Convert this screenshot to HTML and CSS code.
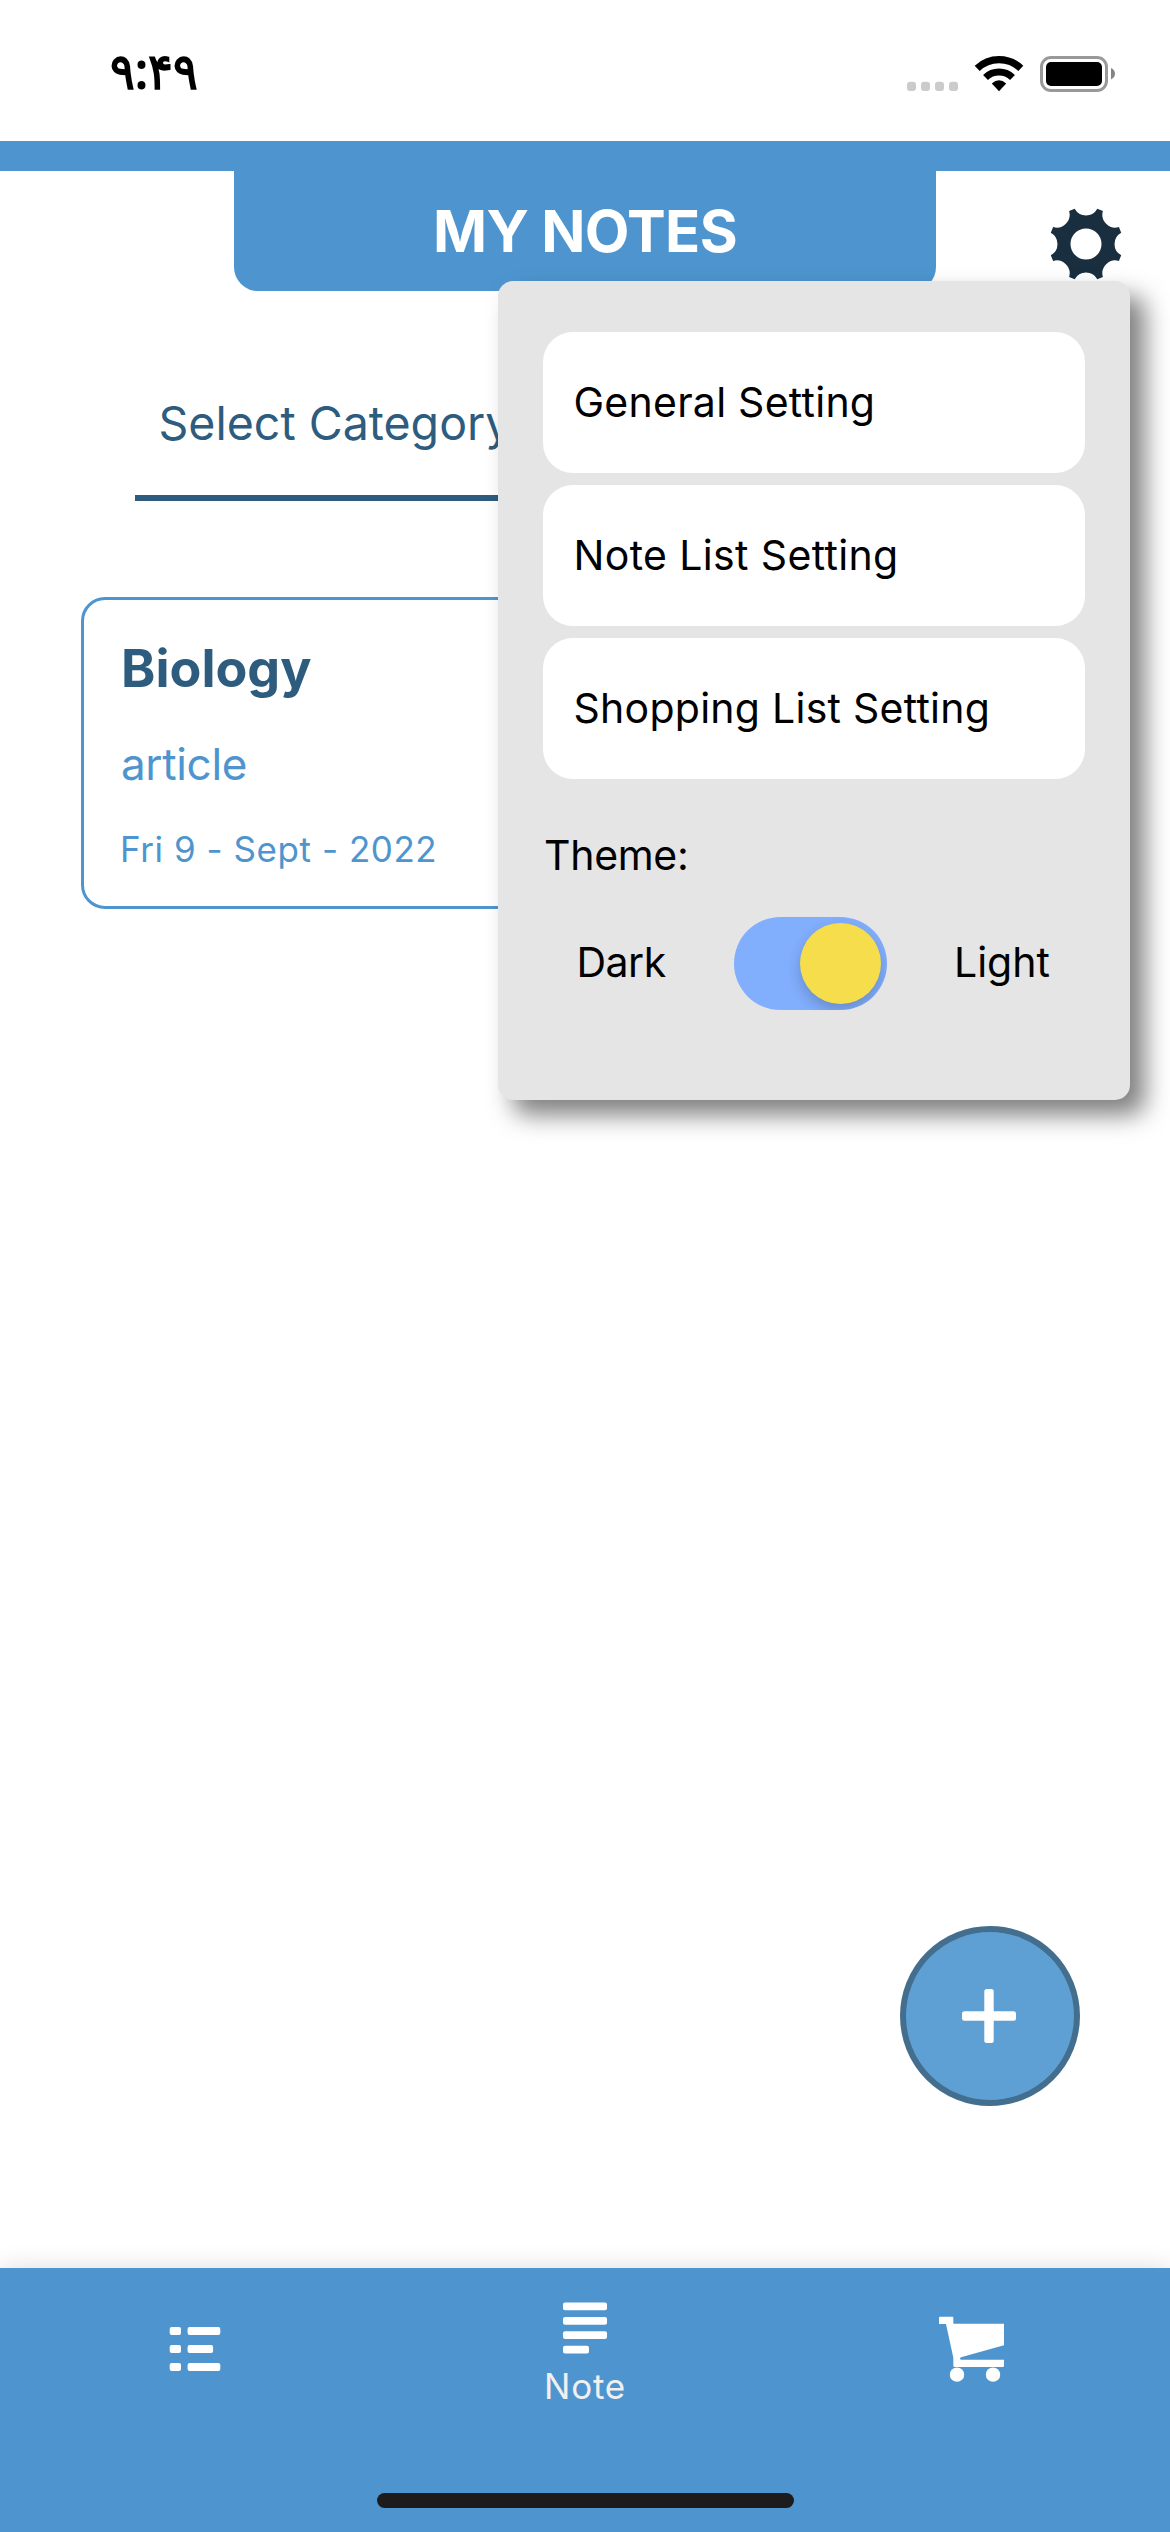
FILE: index.html
```
<!DOCTYPE html>
<html lang="en">
<head>
  <meta charset="utf-8">
  <title>My Notes</title>
  <link rel="stylesheet" href="styles.css">
</head>
<body>
  <div class="status-bar">
    <span class="clock">۹:۴۹</span>
    <svg class="status-icons" width="210" height="38" viewBox="906 55 210 38" aria-hidden="true">
      <g fill="#cbcbcb">
        <rect x="907" y="81.7" width="9" height="9.3" rx="3"/>
        <rect x="921" y="81.7" width="9" height="9.3" rx="3"/>
        <rect x="935" y="81.7" width="9" height="9.3" rx="3"/>
        <rect x="949" y="81.7" width="9" height="9.3" rx="3"/>
      </g>
      <path d="M999 91.2 L991.8 83.6 Q999 76.8 1006.2 83.6 Z"/>
      <path d="M985.5 77.5 A19.5 19.5 0 0 1 1012.5 77.5" fill="none" stroke="#000" stroke-width="7"/>
      <path d="M977.2 68.3 A31.5 31.5 0 0 1 1020.8 68.3" fill="none" stroke="#000" stroke-width="7.2"/>
      <rect x="1041.5" y="57.5" width="65" height="33" rx="9.5" fill="none" stroke="#999" stroke-width="3"/>
      <rect x="1046" y="62" width="56" height="24" rx="5"/>
      <path d="M1111 68 Q1115 70 1115 73.8 Q1115 77.5 1111 79.5 Z" fill="#848484"/>
    </svg>
  </div>

  <header class="header">
    <h1 class="header-title">MY NOTES</h1>
    <svg class="gear" width="76" height="76" viewBox="-38 -38 76 76" role="img" aria-label="Settings">
      <path fill="#192e3f" fill-rule="evenodd" d="M-11.3 -35.2 A12.9 12.9 0 0 0 11.3 -35.2 L16.9 -32.9 A12.9 12.9 0 0 0 32.9 -16.9 L35.2 -11.3 A12.9 12.9 0 0 0 35.2 11.3 L32.9 16.9 A12.9 12.9 0 0 0 16.9 32.9 L11.3 35.2 A12.9 12.9 0 0 0 -11.3 35.2 L-16.9 32.9 A12.9 12.9 0 0 0 -32.9 16.9 L-35.2 11.3 A12.9 12.9 0 0 0 -35.2 -11.3 L-32.9 -16.9 A12.9 12.9 0 0 0 -16.9 -32.9 Z M15.5 0 A15.5 15.5 0 1 0 -15.5 0 A15.5 15.5 0 1 0 15.5 0 Z"/>
    </svg>
  </header>

  <main class="content">
    <div class="category">Select Category</div>
    <article class="note">
      <h2 class="note-title">Biology</h2>
      <p class="note-text">article</p>
      <p class="note-date">Fri 9 - Sept - 2022</p>
    </article>
  </main>

  <nav class="tabs">
    <a class="tab">
      <svg width="52" height="46" viewBox="169 2326 52 46" fill="#fff" aria-label="List">
        <rect x="169.7" y="2327" width="11.3" height="8" rx="2"/><rect x="187.6" y="2327" width="32.7" height="8" rx="2"/>
        <rect x="169.7" y="2345" width="11.3" height="8" rx="2"/><rect x="187.6" y="2345" width="25.5" height="8" rx="2"/>
        <rect x="169.7" y="2363" width="11.3" height="8" rx="2"/><rect x="187.6" y="2363" width="32.7" height="8" rx="2"/>
      </svg>
    </a>
    <a class="tab tab-active">
      <svg width="46" height="54" viewBox="562 2301 46 54" fill="#fff" aria-hidden="true">
        <rect x="563" y="2302.5" width="44" height="7.7" rx="2"/>
        <rect x="563" y="2317" width="44" height="7.7" rx="2"/>
        <rect x="563" y="2331.3" width="44" height="7.7" rx="2"/>
        <rect x="563" y="2345.8" width="26" height="7.7" rx="2"/>
      </svg>
      <span class="tab-label">Note</span>
    </a>
    <a class="tab tab-cart">
      <svg width="66" height="67" viewBox="117 197 198 201" fill="#fff" aria-label="Shopping">
        <path d="M120 199 H157 Q160 199 160 202 V220 H312 V285 L183 321 Q180 323 180 325 Q180 328 185 328 H312 V347 Q312 350 308 350 H164 Q160 350 160 346 V322 L138 221 H117 V202 Q117 199 120 199 Z"/>
        <circle cx="171" cy="373" r="21.5"/><circle cx="279" cy="373" r="21.5"/>
      </svg>
    </a>
    <div class="home-indicator"></div>
  </nav>

  <button class="fab" aria-label="Add note">
    <svg width="54" height="54" viewBox="0 0 54 54" fill="#fff"><rect x="0" y="22.3" width="54" height="9.4" rx="2.5"/><rect x="22.3" y="0" width="9.4" height="54" rx="2.5"/></svg>
  </button>

  <section class="menu">
    <div class="menu-list">
      <div class="menu-item">General Setting</div>
      <div class="menu-item menu-item-notes">Note List Setting</div>
      <div class="menu-item">Shopping List Setting</div>
    </div>
    <div class="theme-label">Theme:</div>
    <div class="theme-row">
      <span class="theme-dark">Dark</span>
      <span class="toggle"><span class="knob"></span></span>
      <span class="theme-light">Light</span>
    </div>
  </section>
</body>
</html>
```
FILE: styles.css
```
* {
  box-sizing: border-box;
  margin: 0;
  padding: 0;
}

body {
  position: relative;
  display: flex;
  flex-direction: column;
  width: 1170px;
  height: 2532px;
  overflow: hidden;
  background: #fff;
  color: #000;
  font-family: Inter, "Liberation Sans", sans-serif;
}

svg {
  display: block;
}

.status-bar {
  display: flex;
  justify-content: space-between;
  align-items: flex-start;
  height: 141px;
  padding: 0 54px 0 110px;
}

.clock {
  padding-top: 36px;
  font: 700 50px/68px "Noto Sans";
  transform: scaleX(0.925);
  transform-origin: left;
}

.status-icons {
  margin-top: 55px;
}

.header {
  display: grid;
  grid-template-columns: 234px 702px 234px;
  height: 150px;
  border-top: 30px solid #4e95cf;
}

.header-title {
  grid-column: 2;
  height: 120px;
  border-radius: 0 0 24px 24px;
  background: #4e95cf;
  color: #fff;
  font-size: 58px;
  font-weight: 700;
  line-height: 120px;
  letter-spacing: -0.64px;
  text-align: center;
}

.gear {
  margin: 34.5px 0 0 112px;
}

.content {
  flex: 1;
  padding-top: 102px;
}

.category {
  width: 900px;
  margin: 0 auto;
  padding: 0 0 42px 23.5px;
  border-bottom: 6px solid #2e5c7e;
  color: #2e5c7e;
  font-size: 46.5px;
  line-height: 60px;
}

.note {
  width: 1008px;
  height: 312px;
  margin: 96px auto 0;
  padding: 36px 37px 0;
  border: 3px solid #4e95cf;
  border-radius: 24px;
  color: #4e95cf;
}

.note-title {
  color: #2e5c7e;
  font-size: 52px;
  font-weight: 700;
  line-height: 66px;
}

.note-text {
  margin-top: 34px;
  font-size: 44px;
  line-height: 56px;
  letter-spacing: -0.35px;
}

.note-date {
  margin: 35px 0 0 -1px;
  font-size: 35px;
  line-height: 44px;
  letter-spacing: 0.55px;
}

.tabs {
  display: grid;
  grid-template: 225px 15px / repeat(3, 390px);
  height: 264px;
  background: #4e95cf;
  box-shadow: 0 0 24px rgba(0, 0, 0, 0.14);
}

.tab {
  display: flex;
  flex-direction: column;
  align-items: center;
  padding-top: 58px;
}

.tab-active {
  padding-top: 33px;
  color: #f0f0f0;
}

.tab-cart {
  padding: 48px 6px 0 0;
}

.tab-label {
  margin-top: 9px;
  font-size: 35px;
  line-height: 44px;
  letter-spacing: 0.75px;
}

.home-indicator {
  grid-column: 1 / -1;
  justify-self: center;
  width: 417px;
  border-radius: 8px;
  background: #1c1c1c;
}

.fab {
  position: absolute;
  left: 900px;
  top: 1926px;
  display: flex;
  align-items: center;
  justify-content: center;
  width: 180px;
  height: 180px;
  padding: 0 2px 1px 0;
  border: 6px solid #446e8d;
  border-radius: 50%;
  background: #5fa0d4;
}

.menu {
  position: absolute;
  left: 498px;
  top: 281px;
  width: 632px;
  height: 819px;
  padding: 51px 45px 0;
  border-radius: 15px;
  background: #e5e5e5;
  box-shadow: 15px 15px 25px rgba(0, 0, 0, 0.5);
  font-size: 41px;
  letter-spacing: 0.26px;
}

.menu-list {
  display: grid;
  grid-template-rows: repeat(3, 141px);
  gap: 12px;
}

.menu-item {
  padding-left: 30.5px;
  border-radius: 30px;
  background: #fff;
  line-height: 141px;
}

.menu-item-notes {
  letter-spacing: 0.36px;
}

.theme-label {
  margin-top: 46px;
  padding-left: 1px;
  line-height: 60px;
  letter-spacing: -0.29px;
}

.theme-row {
  display: grid;
  grid-template-columns: 191px 153px 1fr;
  margin-top: 32px;
  line-height: 90px;
}

.theme-dark {
  padding-left: 33.5px;
  letter-spacing: -0.5px;
}

.theme-light {
  padding-left: 67px;
  letter-spacing: 0;
}

.toggle {
  display: flex;
  align-items: center;
  justify-content: flex-end;
  height: 93px;
  padding-right: 6px;
  overflow: hidden;
  border-radius: 47px;
  background: #81aefd;
}

.knob {
  width: 81px;
  height: 81px;
  border-radius: 50%;
  background: #f5dd4b;
  box-shadow: 0 6px 14px rgba(0, 0, 0, 0.2);
}
```
